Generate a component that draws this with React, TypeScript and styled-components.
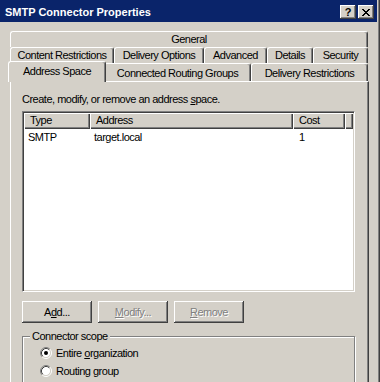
import styled, { createGlobalStyle } from 'styled-components';

const GlobalStyle = createGlobalStyle`
  html, body {
    margin: 0;
    padding: 0;
    background: #d4d0c8;
  }
  * {
    box-sizing: border-box;
  }
`;

const Window = styled.div`
  width: 380px;
  height: 382px;
  overflow: hidden;
  padding-right: 3px;
  background: #d4d0c8;
  box-shadow: inset -1px 0 #404040, inset -2px 0 #808080;
  font-family: 'Liberation Sans', Arial, sans-serif;
  font-size: 11px;
  letter-spacing: -0.5px;
  color: #000;
`;

const TitleBar = styled.div`
  display: flex;
  align-items: center;
  height: 22px;
  padding: 2px 3px 0 5px;
  background: #0a246a;
`;

const Title = styled.div`
  flex: 1;
  color: #fff;
  font-weight: 700;
  letter-spacing: 0;
  line-height: 14px;
`;

const CaptionButton = styled.div<{ $gap?: boolean }>`
  display: flex;
  align-items: center;
  justify-content: center;
  width: 16px;
  height: 14px;
  margin-left: ${({ $gap }) => ($gap ? '2px' : '0')};
  background: #d4d0c8;
  box-shadow: inset -1px -1px #404040, inset 1px 1px #fff, inset -2px -2px #808080;
  font-weight: 700;
  font-size: 11px;
  letter-spacing: 0;
  line-height: 12px;
`;

const Body = styled.div`
  padding: 9px 0 0 10px;
`;

const TabStrip = styled.div`
  width: 358px;
  display: flex;
  flex-direction: column;
`;

const TabRow = styled.div<{ $front?: boolean }>`
  display: flex;
  align-items: flex-end;
  height: ${({ $front }) => ($front ? '18px' : '16px')};
`;

const Tab = styled.div<{ $w?: number; $selected?: boolean; $front?: boolean }>`
  position: ${({ $selected }) => ($selected ? 'relative' : 'static')};
  z-index: ${({ $selected }) => ($selected ? 1 : 'auto')};
  flex: ${({ $w }) => ($w ? `0 0 ${$w}px` : '1')};
  height: ${({ $selected, $front }) => ($selected ? '21px' : $front ? '18px' : '16px')};
  margin: ${({ $selected }) => ($selected ? '0 -2px -1px -2px' : '0')};
  align-self: flex-start;
  margin-top: ${({ $selected }) => ($selected ? '-2px' : '0')};
  display: flex;
  align-items: flex-start;
  justify-content: center;
  padding-top: ${({ $selected, $front }) => ($selected ? '3px' : $front ? '3px' : '1px')};
  background: #d4d0c8;
  border-top: 1px solid #fff;
  border-left: 1px solid #fff;
  border-right: 1px solid #404040;
  border-radius: 3px 3px 0 0;
  box-shadow: inset -1px 0 #808080;
  line-height: 13px;
  white-space: nowrap;
`;

const Panel = styled.div`
  width: 359px;
  height: 320px;
  padding: 11px 0 0 11px;
  border-top: 1px solid #fff;
  border-left: 1px solid #fff;
  border-right: 1px solid #404040;
  box-shadow: inset -1px 0 #808080;
`;

const Description = styled.div`
  line-height: 13px;
  height: 13px;
`;

const ListView = styled.div`
  width: 333px;
  height: 181px;
  margin-top: 5px;
  background: #fff;
  border-style: solid;
  border-width: 1px;
  border-color: #808080 #fff #fff #808080;
  box-shadow: inset 1px 1px #404040, inset -1px -1px #d4d0c8;
  padding: 1px;
`;

const HeaderRow = styled.div`
  display: flex;
  height: 16px;
`;

const HeaderCell = styled.div<{ $w?: number }>`
  flex: ${({ $w }) => ($w ? `0 0 ${$w}px` : '1')};
  height: 16px;
  padding-left: 6px;
  background: #d4d0c8;
  box-shadow: inset 1px 1px #fff, inset -1px -1px #404040, inset -2px -2px #808080;
  line-height: 15px;
  white-space: nowrap;
`;

const DataRow = styled.div`
  display: flex;
  height: 16px;
`;

const DataCell = styled.div<{ $w: number; $pad?: number }>`
  flex: 0 0 ${({ $w }) => $w}px;
  padding-left: ${({ $pad }) => $pad ?? 4}px;
  line-height: 16px;
  white-space: nowrap;
`;

const ButtonRow = styled.div`
  display: flex;
  gap: 6px;
  margin-top: 9px;
`;

const Button = styled.div<{ $disabled?: boolean }>`
  width: 70px;
  height: 22px;
  display: flex;
  align-items: center;
  justify-content: center;
  background: #d4d0c8;
  box-shadow: inset -1px -1px #404040, inset 1px 1px #fff, inset -2px -2px #808080;
  color: ${({ $disabled }) => ($disabled ? '#808080' : '#000')};
  text-shadow: ${({ $disabled }) => ($disabled ? '1px 1px #fff' : 'none')};
`;

const GroupBox = styled.fieldset`
  width: 333px;
  height: 80px;
  margin: 7px 0 0 0;
  padding: 0;
  border: 1px solid #808080;
  box-shadow: inset 1px 1px #fff, 1px 1px #fff;
`;

const Legend = styled.legend`
  margin-left: 7px;
  padding: 0 2px;
  background: #d4d0c8;
  line-height: 13px;
`;

const Options = styled.div`
  padding: 1px 0 0 17px;
`;

const RadioRow = styled.div`
  display: flex;
  align-items: center;
  gap: 4px;
  height: 18px;
`;

function Radio({ checked }: { checked?: boolean }) {
  return (
    <svg width="12" height="12" viewBox="0 0 12 12">
      <circle cx="6" cy="6" r="4.5" fill="#fff" />
      <path d="M2.11 9.89A5.5 5.5 0 0 1 9.89 2.11" fill="none" stroke="#808080" />
      <path d="M9.89 2.11A5.5 5.5 0 0 1 2.11 9.89" fill="none" stroke="#fff" />
      <path d="M2.82 9.18A4.5 4.5 0 0 1 9.18 2.82" fill="none" stroke="#404040" />
      <path d="M9.18 2.82A4.5 4.5 0 0 1 2.82 9.18" fill="none" stroke="#d4d0c8" />
      {checked && <circle cx="6" cy="6" r="2" fill="#000" />}
    </svg>
  );
}

function CloseGlyph() {
  return (
    <svg width="8" height="7" viewBox="0 0 8 7">
      <path d="M0 0L7 7M1 0L8 7M7 0L0 7M8 0L1 7" stroke="#000" strokeWidth="1" />
    </svg>
  );
}

const tabRows = [
  [{ label: 'General' }],
  [
    { label: 'Content Restrictions', w: 104 },
    { label: 'Delivery Options', w: 90 },
    { label: 'Advanced', w: 63 },
    { label: 'Details', w: 46 },
    { label: 'Security' },
  ],
];

export default function App() {
  return (
    <>
      <GlobalStyle />
      <Window>
        <TitleBar>
          <Title>SMTP Connector Properties</Title>
          <CaptionButton>?</CaptionButton>
          <CaptionButton $gap>
            <CloseGlyph />
          </CaptionButton>
        </TitleBar>
        <Body>
          <TabStrip>
            {tabRows.map((row, i) => (
              <TabRow key={i}>
                {row.map((t) => (
                  <Tab key={t.label} $w={'w' in t ? t.w : undefined}>
                    {t.label}
                  </Tab>
                ))}
              </TabRow>
            ))}
            <TabRow $front>
              <Tab $front $selected $w={98}>
                Address Space
              </Tab>
              <Tab $front $w={147}>
                Connected Routing Groups
              </Tab>
              <Tab $front>Delivery Restrictions</Tab>
            </TabRow>
          </TabStrip>
          <Panel>
            <Description>
              Create, modify, or remove an address <u>s</u>pace.
            </Description>
            <ListView>
              <HeaderRow>
                <HeaderCell $w={66}>Type</HeaderCell>
                <HeaderCell $w={203}>Address</HeaderCell>
                <HeaderCell $w={52}>Cost</HeaderCell>
                <HeaderCell />
              </HeaderRow>
              <DataRow>
                <DataCell $w={66}>SMTP</DataCell>
                <DataCell $w={203}>target.local</DataCell>
                <DataCell $w={52} $pad={6}>
                  1
                </DataCell>
              </DataRow>
            </ListView>
            <ButtonRow>
              <Button>
                A<u>d</u>d...
              </Button>
              <Button $disabled>
                <u>M</u>odify...
              </Button>
              <Button $disabled>
                <u>R</u>emove
              </Button>
            </ButtonRow>
            <GroupBox>
              <Legend>Connector scope</Legend>
              <Options>
                <RadioRow>
                  <Radio checked />
                  <span>
                    Entire <u>o</u>rganization
                  </span>
                </RadioRow>
                <RadioRow>
                  <Radio />
                  <span>
                    Routing <u>g</u>roup
                  </span>
                </RadioRow>
              </Options>
            </GroupBox>
          </Panel>
        </Body>
      </Window>
    </>
  );
}
